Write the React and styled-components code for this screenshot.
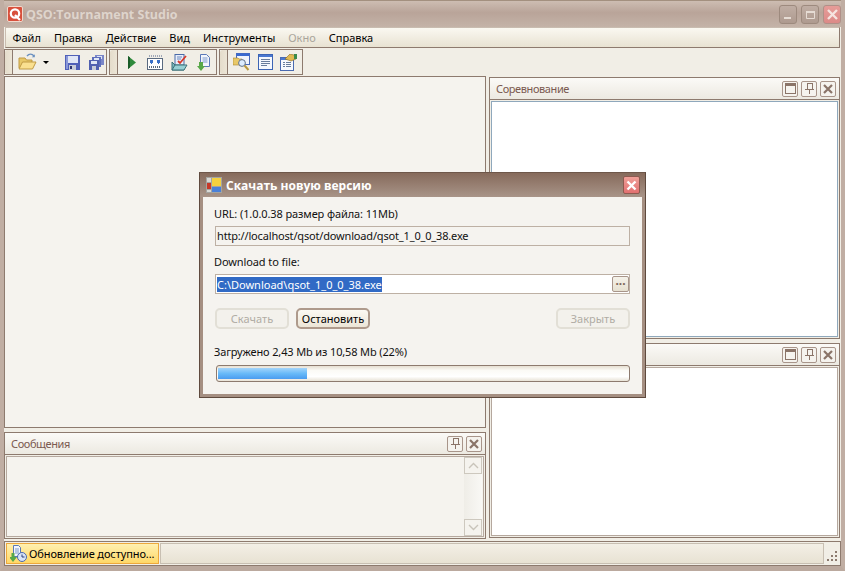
import React from "react";
import styled, { createGlobalStyle } from "styled-components";

const GlobalStyle = createGlobalStyle`
  html, body { margin: 0; padding: 0; background: #fff; }
  * { box-sizing: border-box; }
  body { font-family: "Noto Sans", "DejaVu Sans", sans-serif; font-size: 11px; }
`;

const menuItems = ["Файл", "Правка", "Действие", "Вид", "Инструменты", "Окно", "Справка"];

export default function App() {
  return (
    <Window>
      <GlobalStyle />
      <TitleBar>
        <AppLogo>
          <svg width="16" height="16" viewBox="0 0 16 16">
            <circle cx="8" cy="7.5" r="4.2" fill="none" stroke="#fff" strokeWidth="2.2" />
            <path d="M8 9l5 5" stroke="#fff" strokeWidth="2.2" />
          </svg>
        </AppLogo>
        <AppTitle>QSO:Tournament Studio</AppTitle>
        <WinButtons>
          <WinButton>
            <svg width="11" height="11" viewBox="0 0 11 11"><rect x="1" y="8" width="7" height="2" fill="#e6dcd4" /></svg>
          </WinButton>
          <WinButton>
            <svg width="11" height="11" viewBox="0 0 11 11"><path d="M1.5 2.5h8v7h-8z" fill="none" stroke="#e6dcd4" /><rect x="1" y="2" width="9" height="2" fill="#e6dcd4" /></svg>
          </WinButton>
          <WinButton $close>
            <svg width="13" height="13" viewBox="0 0 13 13"><path d="M2 2l9 9M11 2l-9 9" stroke="#f6e4e0" strokeWidth="2.4" /></svg>
          </WinButton>
        </WinButtons>
      </TitleBar>

      <MenuBar>
        {menuItems.map((item) => (
          <MenuItem key={item} $disabled={item === "Окно"}>{item}</MenuItem>
        ))}
      </MenuBar>

      <ToolRow>
        <ToolStrip $width={103}>
          <Grip />
          <ToolIcon $ml={5}><FolderOpen /></ToolIcon>
          <DropArrow />
          <ToolSep />
          <ToolIcon $ml={6}><Floppy /></ToolIcon>
          <ToolIcon $ml={4}><FloppyAll /></ToolIcon>
        </ToolStrip>
        <ToolStrip $width={108}>
          <Grip />
          <ToolIcon $ml={3}><Play /></ToolIcon>
          <ToolIcon $ml={4}><Calendar /></ToolIcon>
          <ToolIcon $ml={4}><CheckFolder /></ToolIcon>
          <ToolIcon $ml={4}><DocDown /></ToolIcon>
        </ToolStrip>
        <ToolStrip $width={84}>
          <Grip />
          <ToolIcon $ml={3}><SearchWin /></ToolIcon>
          <ToolIcon $ml={4}><ListWin /></ToolIcon>
          <ToolIcon $ml={3}><HandWin /></ToolIcon>
        </ToolStrip>
      </ToolRow>

      <Workspace>
        <LeftColumn>
          <DocArea />
          <Panel $height={107}>
            <PanelHeader>
              <PanelTitle>Сообщения</PanelTitle>
              <PinButton />
              <CloseButton />
            </PanelHeader>
            <PanelBody $muted>
              <ScrollBar>
                <ScrollButton>
                  <svg width="11" height="7" viewBox="0 0 11 7"><path d="M1 6l4.5-4.5L10 6" fill="none" stroke="#c9c4ba" strokeWidth="1.4" /></svg>
                </ScrollButton>
                <ScrollButton>
                  <svg width="11" height="7" viewBox="0 0 11 7"><path d="M1 1l4.5 4.5L10 1" fill="none" stroke="#c9c4ba" strokeWidth="1.4" /></svg>
                </ScrollButton>
              </ScrollBar>
            </PanelBody>
          </Panel>
        </LeftColumn>
        <RightColumn>
          <Panel $height={262}>
            <PanelHeader>
              <PanelTitle>Соревнование</PanelTitle>
              <DockButton />
              <PinButton />
              <CloseButton />
            </PanelHeader>
            <PanelBody $accent />
          </Panel>
          <Panel $height={195}>
            <PanelHeader>
              <PanelTitle />
              <DockButton />
              <PinButton />
              <CloseButton />
            </PanelHeader>
            <PanelBody />
          </Panel>
        </RightColumn>
      </Workspace>

      <StatusBar>
        <UpdatePane>
          <StatusIcon />
          <span>Обновление доступно...</span>
        </UpdatePane>
        <EmptyPane />
        <SizeGrip>
          <svg width="12" height="12" viewBox="0 0 12 12" shapeRendering="crispEdges">
            {[[8, 0], [8, 4], [4, 4], [8, 8], [4, 8], [0, 8]].map(([x, y]) => (
              <rect key={`${x}-${y}`} x={x} y={y} width="2" height="2" fill="#8c7a6e" />
            ))}
          </svg>
        </SizeGrip>
      </StatusBar>

      <Dialog>
        <DialogTitle>
          <DialogIcon />
          <DialogCaption>Скачать новую версию</DialogCaption>
          <DialogClose>
            <svg width="11" height="11" viewBox="0 0 11 11"><path d="M1.5 1.5l8 8M9.5 1.5l-8 8" stroke="#fff" strokeWidth="2.4" /></svg>
          </DialogClose>
        </DialogTitle>
        <DialogBody>
          <FieldLabel>URL: (1.0.0.38 размер файла: 11Mb)</FieldLabel>
          <ReadonlyField>http://localhost/qsot/download/qsot_1_0_0_38.exe</ReadonlyField>
          <FieldLabel $top={8}>Download to file:</FieldLabel>
          <FileField>
            <Selected>C:\Download\qsot_1_0_0_38.exe</Selected>
            <BrowseButton>···</BrowseButton>
          </FileField>
          <ButtonRow>
            <DialogButton disabled>Скачать</DialogButton>
            <DialogButton>Остановить</DialogButton>
            <DialogButton disabled $right>Закрыть</DialogButton>
          </ButtonRow>
          <ProgressLabel>Загружено 2,43 Mb из 10,58 Mb (22%)</ProgressLabel>
          <ProgressTrack>
            <ProgressFill style={{ width: `${22 * 0.99}%` }} />
          </ProgressTrack>
        </DialogBody>
      </Dialog>
    </Window>
  );
}

function FolderOpen() {
  return (
    <svg width="20" height="18" viewBox="0 0 20 18">
      <path d="M9 3c2-2.5 5-2.5 7 0" fill="none" stroke="#6a90c0" strokeWidth="1.4" />
      <path d="M16.8 1.2v3h-3z" fill="#6a90c0" />
      <path d="M1 15V5h6l1.500 2H14v2z" fill="#e8c868" stroke="#c09a44" />
      <path d="M1 16l3.500-7H18l-3.500 7z" fill="#fae090" stroke="#c09a44" />
    </svg>
  );
}

function Floppy() {
  return (
    <svg width="15" height="15" viewBox="0 0 15 15" shapeRendering="crispEdges">
      <rect x="0" y="0" width="15" height="15" fill="#5060b8" />
      <rect x="1" y="1" width="2" height="13" fill="#8a98d8" />
      <rect x="3" y="1" width="10" height="7" fill="#e0e6f6" />
      <rect x="4" y="10" width="7" height="5" fill="#c8ccd8" />
      <rect x="5" y="11" width="2" height="3" fill="#2c3470" />
    </svg>
  );
}

function FloppyAll() {
  return (
    <svg width="15" height="15" viewBox="0 0 15 15" shapeRendering="crispEdges">
      <rect x="6" y="0" width="9" height="10" fill="#7a86c8" />
      <rect x="8" y="1" width="5" height="3" fill="#dfe6f5" />
      <rect x="3" y="2" width="9" height="10" fill="#5e6ebc" />
      <rect x="5" y="3" width="5" height="3" fill="#dfe6f5" />
      <rect x="0" y="5" width="10" height="10" fill="#5060b0" />
      <rect x="2" y="6" width="6" height="3" fill="#dfe6f5" />
      <rect x="3" y="11" width="4" height="4" fill="#c8ccd8" />
    </svg>
  );
}

function Play() {
  return (
    <svg width="9" height="13" viewBox="0 0 9 13">
      <path d="M1 0l8 6.500L1 13z" fill="#2f8a3c" />
      <path d="M1 0l2 1.500V11.500L1 13z" fill="#1a5c28" />
    </svg>
  );
}

function Calendar() {
  return (
    <svg width="16" height="15" viewBox="0 0 16 15" shapeRendering="crispEdges">
      <rect x="0.500" y="3.500" width="15" height="11" fill="#fff" stroke="#5a6a80" />
      {[0, 1, 2, 3, 4, 5, 6].map((i) => (
        <rect key={i} x={2 + i * 2} y="0" width="1" height="2" fill="#a0a8b8" />
      ))}
      <path d="M3 5h3v2h1L4.500 9 2 7h1zM10 5h3v2h1l-2.500 2L9 7h1z" fill="#3a70c8" />
      {[2, 4, 6, 8, 10, 12].map((x) => (
        <rect key={x} x={x} y="11" width="1" height="2" fill="#5a6a80" />
      ))}
    </svg>
  );
}

function CheckFolder() {
  return (
    <svg width="17" height="17" viewBox="0 0 17 17">
      <rect x="4" y="0.500" width="9" height="11" fill="#e8eefa" stroke="#4a6aa8" />
      <path d="M6 3h5M6 5h4" stroke="#6a88c0" />
      <path d="M7 7l2 2 6-7" fill="none" stroke="#d83828" strokeWidth="1.800" />
      <path d="M1 16V8l3 3h9v5z" fill="#7ab8c0" stroke="#3a7078" />
      <path d="M1 16l3-5h12l-3 5z" fill="#98d0d4" stroke="#3a7078" />
    </svg>
  );
}

function DocDown() {
  return (
    <svg width="13" height="17" viewBox="0 0 13 17">
      <path d="M3.500 0.500h6l3 3v9h-9z" fill="#f2f5fc" stroke="#5a78b8" />
      <path d="M5.500 4h5M5.500 6h5M5.500 8h5" stroke="#7a98cc" />
      <path d="M2 8h4v4h2l-4 5-4-5h2z" fill="#58a848" />
    </svg>
  );
}

function SearchWin() {
  return (
    <svg width="17" height="18" viewBox="0 0 17 18">
      <rect x="3.500" y="0.500" width="13" height="11" fill="#f0f4fc" stroke="#4a6ab8" />
      <rect x="3.500" y="0.500" width="13" height="2.500" fill="#3a6ad0" />
      <path d="M0 5h5l1 1h3v6H0z" fill="#e8c868" stroke="#a88830" strokeWidth="0.600" />
      <circle cx="9" cy="10" r="3.400" fill="#dcecff" stroke="#607088" />
      <path d="M11.500 12.500l4 4.500" stroke="#b89840" strokeWidth="2" />
    </svg>
  );
}

function ListWin() {
  return (
    <svg width="15" height="16" viewBox="0 0 15 16" shapeRendering="crispEdges">
      <rect x="0.500" y="0.500" width="14" height="15" fill="#f4f7fd" stroke="#3c64b4" />
      <rect x="1" y="1" width="13" height="2" fill="#4a78d0" />
      <path d="M3 5.500h9M3 7.500h9M3 9.500h9M3 11.500h6" stroke="#687c9c" />
    </svg>
  );
}

function HandWin() {
  return (
    <svg width="17" height="17" viewBox="0 0 17 17">
      <rect x="0.500" y="3.500" width="13" height="13" fill="#f6f8fd" stroke="#4a6ab0" />
      <rect x="1" y="4" width="12" height="2" fill="#4a78d0" />
      <path d="M3 8.500h2M6 8.500h5M3 10.500h2M6 10.500h5M3 12.500h2M6 12.500h5" stroke="#687c9c" />
      <path d="M5 5l5-5 4 1 2 1v3l-5 2z" fill="#e0b850" stroke="#8a6a20" strokeWidth="0.600" />
      <rect x="14" y="0" width="3" height="5" fill="#3a8a48" />
    </svg>
  );
}

function StatusIcon() {
  return (
    <StatusSvg width="17" height="17" viewBox="0 0 17 17">
      <path d="M3.500 0.500h5l2 2v9h-7z" fill="#f2f5fc" stroke="#5a78b8" />
      <path d="M5 4h4M5 6h4M5 8h4" stroke="#7a98cc" />
      <path d="M1.500 8h3v4H7l-4 5-4-5h2.500z" fill="#58a848" />
      <circle cx="12" cy="12" r="4.500" fill="#d8e4f8" stroke="#4a68b0" />
      <path d="M12 9.500V12h2.500" fill="none" stroke="#2a3c78" />
    </StatusSvg>
  );
}

function DockButton() {
  return (
    <SmallButton>
      <svg width="11" height="11" viewBox="0 0 11 11" shapeRendering="crispEdges">
        <rect x="0.500" y="0.500" width="10" height="10" fill="none" stroke="#8a7468" />
        <rect x="0" y="0" width="11" height="3" fill="#8a7468" />
      </svg>
    </SmallButton>
  );
}

function PinButton() {
  return (
    <SmallButton>
      <svg width="9" height="11" viewBox="0 0 9 11" shapeRendering="crispEdges">
        <rect x="2" y="0" width="5" height="6" fill="none" stroke="#8a7468" />
        <rect x="0" y="6" width="9" height="1" fill="#8a7468" />
        <rect x="4" y="7" width="1" height="4" fill="#8a7468" />
      </svg>
    </SmallButton>
  );
}

function CloseButton() {
  return (
    <SmallButton>
      <svg width="10" height="10" viewBox="0 0 10 10"><path d="M1 1l8 8M9 1l-8 8" stroke="#8a7468" strokeWidth="2.200" /></svg>
    </SmallButton>
  );
}

function DialogIcon() {
  return (
    <IconSvg width="16" height="16" viewBox="0 0 16 16" shapeRendering="crispEdges">
      <rect x="0" y="0" width="16" height="16" fill="#a4a4a0" />
      <rect x="1" y="1" width="4" height="4" fill="#d8d8d4" />
      <rect x="6" y="1" width="9" height="8" fill="#f4d040" />
      <rect x="1" y="6" width="4" height="6" fill="#c83828" />
      <rect x="6" y="10" width="9" height="5" fill="#4a80d8" />
      <rect x="1" y="13" width="4" height="2" fill="#d8d8d4" />
    </IconSvg>
  );
}

const Window = styled.div`
  position: relative;
  width: 845px;
  height: 571px;
  display: flex;
  flex-direction: column;
  overflow: hidden;
  background: #f1eee6;
  border-left: 4px solid #c0aea3;
  border-right: 4px solid #c0aea3;
  border-bottom: 5px solid #bba99e;
`;

const TitleBar = styled.div`
  height: 27px;
  margin: 0 -4px;
  flex: none;
  display: flex;
  align-items: center;
  padding: 0 4px 0 7px;
  background: linear-gradient(#cdbdb2, #b9a499 45%, #c4b3a8);
  border-top: 1px solid #a3907f;
`;

const AppLogo = styled.div`
  width: 16px;
  height: 16px;
  display: flex;
  align-items: center;
  justify-content: center;
  background: #d8503c;
  border: 1px solid #f2d8cc;
  border-radius: 2px;
  svg { margin: -1px; flex: none; }
`;

const AppTitle = styled.div`
  margin-left: 3px;
  font-family: "Open Sans", sans-serif;
  font-weight: 700;
  font-size: 12.5px;
  color: #ded4cc;
  white-space: nowrap;
`;

const WinButtons = styled.div`
  margin-left: auto;
  display: flex;
  gap: 4px;
`;

const WinButton = styled.div`
  width: 18px;
  height: 19px;
  display: flex;
  align-items: center;
  justify-content: center;
  border: 1px solid ${(p) => (p.$close ? "#b09088" : "#9d8a7e")};
  border-radius: 3px;
  background: ${(p) => (p.$close ? "linear-gradient(#e69c98, #dc8a88)" : "linear-gradient(#c0aea4, #ae9a8f)")};
`;

const MenuBar = styled.div`
  height: 21px;
  flex: none;
  margin: 0 1px;
  display: flex;
  align-items: center;
  background: linear-gradient(#faf8f1, #e8e2d2);
  border: 1px solid #8d7a6e;
  border-top-color: #c9bcb0;
  border-left-color: #c9bcb0;
`;

const MenuItem = styled.div`
  padding: 0 6.5px;
  color: ${(p) => (p.$disabled ? "#aaa59c" : "#000")};
  white-space: nowrap;
`;

const ToolRow = styled.div`
  height: 28px;
  flex: none;
  display: flex;
  align-items: center;
  gap: 2px;
`;

const ToolStrip = styled.div`
  width: ${(p) => p.$width}px;
  height: 26px;
  display: flex;
  align-items: center;
  background: #f1eee6;
  border: 1px solid #8d7a6e;
`;

const Grip = styled.div`
  width: 8px;
  height: 24px;
  flex: none;
  border-radius: 3px 0 0 3px;
  background: linear-gradient(90deg, #e4dccb, #ece5d6);
  border-right: 1px solid #8d7a6e;
`;

const ToolIcon = styled.div`
  width: 20px;
  height: 20px;
  margin-left: ${(p) => p.$ml}px;
  display: flex;
  align-items: center;
  justify-content: center;
  flex: none;
`;

const DropArrow = styled.div`
  width: 0;
  height: 0;
  margin-left: 5px;
  border-left: 3px solid transparent;
  border-right: 3px solid transparent;
  border-top: 3px solid #000;
`;

const ToolSep = styled.div`
  width: 1px;
  height: 18px;
  margin-left: 7px;
  background: #8d7a6e;
`;

const Workspace = styled.div`
  flex: 1;
  min-height: 0;
  display: flex;
  gap: 3px;
  padding: 0 0 2px;
`;

const LeftColumn = styled.div`
  width: 482px;
  display: flex;
  flex-direction: column;
  gap: 4px;
`;

const RightColumn = styled.div`
  width: 351px;
  padding-top: 1px;
  display: flex;
  flex-direction: column;
  gap: 4px;
`;

const DocArea = styled.div`
  flex: 1;
  background: #f5f3ee;
  border: 1px solid #8d7a6e;
`;

const Panel = styled.div`
  height: ${(p) => p.$height}px;
  flex: none;
  display: flex;
  flex-direction: column;
  background: #f1eee6;
  border: 1px solid #8d7a6e;
`;

const PanelHeader = styled.div`
  height: 22px;
  flex: none;
  display: flex;
  align-items: center;
  gap: 3px;
  padding: 0 3px 0 6px;
  background: linear-gradient(#fbfaf7, #ece9e1);
  border-bottom: 1px solid #8d7a6e;
`;

const PanelTitle = styled.div`
  flex: 1;
  color: #7b5a50;
  letter-spacing: -0.4px;
`;

const SmallButton = styled.div`
  width: 16px;
  height: 16px;
  display: flex;
  align-items: center;
  justify-content: center;
  border: 1px solid #a8958a;
  border-radius: 2px;
  background: #f5f3ee;
`;

const PanelBody = styled.div`
  flex: 1;
  min-height: 0;
  position: relative;
  margin: 1px;
  background: ${(p) => (p.$muted ? "#f5f3ee" : "#fff")};
  border: 1px solid ${(p) => (p.$accent ? "#8fa8bc" : "#b5a89e")};
`;

const ScrollBar = styled.div`
  position: absolute;
  top: 0;
  right: 1px;
  bottom: 0;
  width: 18px;
  display: flex;
  flex-direction: column;
  justify-content: space-between;
  background: linear-gradient(90deg, #efede7, #f9f8f5);
`;

const ScrollButton = styled.div`
  height: 17px;
  display: flex;
  align-items: center;
  justify-content: center;
  border: 1px solid #cdc8be;
  background: #f5f3ee;
`;

const StatusBar = styled.div`
  height: 25px;
  flex: none;
  display: flex;
  align-items: stretch;
  gap: 1px;
  padding: 1px 0 1px 1px;
  background: #f1eee6;
  border: 1px solid #8d7a6e;
`;

const UpdatePane = styled.div`
  width: 153px;
  display: flex;
  align-items: center;
  gap: 2px;
  padding-left: 3px;
  letter-spacing: -0.1px;
  border: 1px solid #eda83c;
  background: linear-gradient(#fff0b0, #ffd868);
  white-space: nowrap;
`;

const StatusSvg = styled.svg`
  flex: none;
`;

const EmptyPane = styled.div`
  width: 664px;
  border: 1px solid #c8bfb2;
  background: linear-gradient(#f3efe6, #e8e2d3);
`;

const SizeGrip = styled.div`
  flex: 1;
  display: flex;
  align-items: flex-end;
  justify-content: flex-end;
  padding: 0 1px 1px 0;
`;

const Dialog = styled.div`
  position: absolute;
  left: 195px;
  top: 172px;
  width: 447px;
  height: 226px;
  display: flex;
  flex-direction: column;
  border: 1px solid #5f4a3e;
  border-top-color: #6e574a;
  background: #a58f82;
  padding: 0 3px 3px;
`;

const DialogTitle = styled.div`
  height: 24px;
  flex: none;
  display: flex;
  align-items: center;
  margin: 0 -3px;
  padding-left: 6px;
  padding-right: 5px;
  background: linear-gradient(#866a5b, #a89488);
`;

const IconSvg = styled.svg`
  flex: none;
`;

const DialogCaption = styled.div`
  margin-left: 4px;
  flex: 1;
  font-family: "Open Sans", sans-serif;
  font-weight: 700;
  font-size: 12px;
  color: #fff;
`;

const DialogClose = styled.div`
  width: 17px;
  height: 18px;
  display: flex;
  align-items: center;
  justify-content: center;
  border: 1px solid #8e5a50;
  border-radius: 2px;
  background: linear-gradient(#f0a098, #e27070);
`;

const DialogBody = styled.div`
  flex: 1;
  display: flex;
  flex-direction: column;
  padding: 9px 12px 0 12px;
  background: #f5f3ef;
`;

const FieldLabel = styled.div`
  height: 16px;
  margin-top: ${(p) => p.$top || 0}px;
  line-height: 16px;
  letter-spacing: -0.1px;
  margin-left: -1px;
  color: #111;
`;

const ReadonlyField = styled.div`
  height: 20px;
  margin-top: 4px;
  padding-left: 1px;
  line-height: 18px;
  letter-spacing: -0.17px;
  border: 1px solid #bdb0a4;
  background: #f5f3ef;
  color: #111;
`;

const FileField = styled.div`
  height: 20px;
  margin-top: 4px;
  display: flex;
  align-items: center;
  padding-left: 1px;
  border: 1px solid #bdb0a4;
  background: #fff;
`;

const Selected = styled.span`
  background: #316ac5;
  color: #fff;
  line-height: 15px;
`;

const BrowseButton = styled.div`
  width: 17px;
  height: 16px;
  margin-left: auto;
  text-align: center;
  line-height: 13px;
  font-weight: 700;
  font-size: 12px;
  color: #7c6458;
  border: 1px solid #a8958a;
  border-radius: 2px;
  background: linear-gradient(#f5f2ea, #e6e0d0);
`;

const ButtonRow = styled.div`
  display: flex;
  gap: 7px;
  margin-top: 14px;
`;

const DialogButton = styled.button`
  width: 74px;
  height: 21px;
  padding: 0;
  margin-left: ${(p) => (p.$right ? "auto" : 0)};
  font: inherit;
  color: ${(p) => (p.disabled ? "#b0aca4" : "#000")};
  border: ${(p) => (p.disabled ? "2px solid #e2dfd6" : "2px solid #ae9a8c")};
  border-radius: 5px;
  background: ${(p) => (p.disabled ? "#f3f1ec" : "linear-gradient(#fbf9f3, #ece5d7)")};
`;

const ProgressLabel = styled.div`
  margin-top: 15px;
  margin-left: -1px;
  line-height: 16px;
  letter-spacing: -0.14px;
  color: #111;
`;

const ProgressTrack = styled.div`
  width: 414px;
  height: 17px;
  margin-top: 5px;
  margin-left: 1px;
  padding: 2px 2px 2px 1px;
  border: 1px solid #8d7a6e;
  border-radius: 3px;
  background: linear-gradient(#e6dfd2, #fbfaf6 30%, #fff 70%, #e8e2d6);
`;

const ProgressFill = styled.div`
  height: 100%;
  background: linear-gradient(#a4d4fa, #68baf8 50%, #4a9cf0);
`;
